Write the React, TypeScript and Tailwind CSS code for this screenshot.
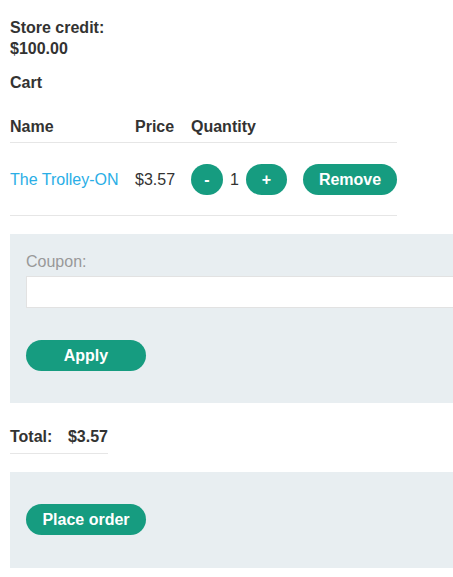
const GREEN = "bg-[#169c80]"

function Pill({ label, className = "" }: { label: string; className?: string }) {
  return (
    <button
      className={`${GREEN} flex h-[31px] items-center justify-center rounded-full font-bold text-white ${className}`}
    >
      {label}
    </button>
  )
}

export default function App() {
  return (
    <div className="w-[453px] overflow-hidden px-[10px] pb-[9px] font-['Liberation_Sans',Arial,sans-serif] text-[16px] leading-[21px] text-[#333332]">
      {/* credit */}
      <p className="pt-[17px] font-bold">
        Store credit:
        <br />
        $100.00
      </p>
      <p className="mt-[13px] font-bold">Cart</p>

      {/* cart table */}
      <div className="mt-[23px] w-[387px]">
        <div className="flex h-[27px] border-b border-[#e6e6e6] font-bold">
          <span className="w-[125px]">Name</span>
          <span className="w-[56px]">Price</span>
          <span className="w-[112px]">Quantity</span>
        </div>
        <div className="flex h-[73px] items-center border-b border-[#e6e6e6]">
          <a className="w-[125px] text-[#2aaee6]">The Trolley-ON</a>
          <span className="w-[56px]">$3.57</span>
          <div className="flex w-[112px] items-center">
            <Pill label="-" className="w-[32px]" />
            <span className="mx-[7px] w-[9px]">1</span>
            <Pill label="+" className="w-[41px]" />
          </div>
          <Pill label="Remove" className="w-[94px]" />
        </div>
      </div>

      {/* coupon */}
      <div className="mt-[18px] w-[600px] bg-[#e8eef1] px-[16px] pt-[17px] pb-[32px]">
        <label className="block text-[#999999]">Coupon:</label>
        <input className="mt-[4px] block h-[32px] w-full border border-[#e2e2e2] bg-white outline-none" />
        <Pill label="Apply" className="mt-[32px] w-[120px]" />
      </div>

      {/* total */}
      <div className="mt-[23px] flex w-[98px] border-b border-[#e6e6e6] pb-[6px] font-bold">
        <span className="w-[58px]">Total:</span>
        <span>$3.57</span>
      </div>

      <div className="mt-[18px] w-[600px] bg-[#e8eef1] px-[16px] pt-[32px] pb-[33px]">
        <Pill label="Place order" className="w-[120px]" />
      </div>
    </div>
  )
}
